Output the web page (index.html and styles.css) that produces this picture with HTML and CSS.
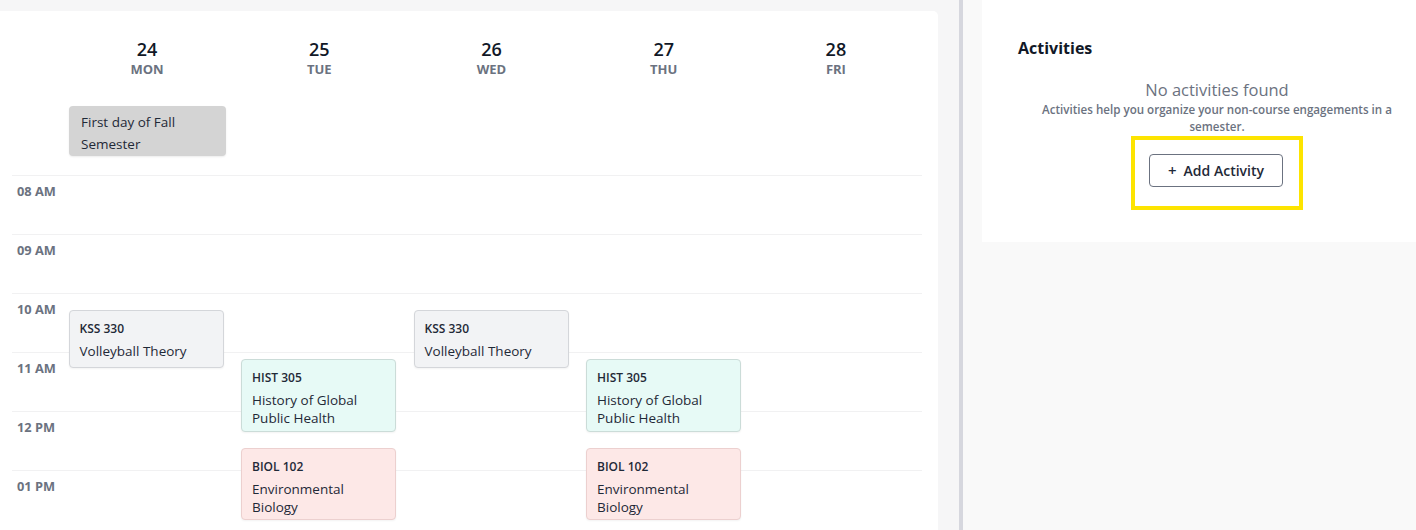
FILE: index.html
```html
<!DOCTYPE html>
<html lang="en">

<head>
    <meta charset="UTF-8">
    <meta name="viewport" content="width=device-width, initial-scale=1.0">
    <link rel="stylesheet" href="styles.css">
</head>

<body>
    <div class="page">
        <div class="calendar-pane">
            <div class="calendar">
                <div class="day-header">
                    <div class="gutter"></div>
                    <div class="day"><span class="day-num">24</span><span class="day-name">MON</span></div>
                    <div class="day"><span class="day-num">25</span><span class="day-name">TUE</span></div>
                    <div class="day"><span class="day-num">26</span><span class="day-name">WED</span></div>
                    <div class="day"><span class="day-num">27</span><span class="day-name">THU</span></div>
                    <div class="day"><span class="day-num">28</span><span class="day-name">FRI</span></div>
                </div>

                <div class="all-day">
                    <div class="gutter"></div>
                    <div class="all-day-cell">
                        <div class="all-day-event">First day of Fall Semester</div>
                    </div>
                    <div class="all-day-cell"></div>
                    <div class="all-day-cell"></div>
                    <div class="all-day-cell"></div>
                    <div class="all-day-cell"></div>
                </div>

                <div class="time-grid">
                    <div class="hour-row"><span class="hour-label">08 AM</span></div>
                    <div class="hour-row"><span class="hour-label">09 AM</span></div>
                    <div class="hour-row"><span class="hour-label">10 AM</span></div>
                    <div class="hour-row"><span class="hour-label">11 AM</span></div>
                    <div class="hour-row"><span class="hour-label">12 PM</span></div>
                    <div class="hour-row"><span class="hour-label">01 PM</span></div>

                    <div class="day-cols">
                        <div class="day-col">
                            <div class="event event-grey" style="top: 135px; height: 58px;">
                                <div class="event-code">KSS 330</div>
                                <div class="event-title">Volleyball Theory</div>
                            </div>
                        </div>
                        <div class="day-col">
                            <div class="event event-mint" style="top: 184px; height: 73px;">
                                <div class="event-code">HIST 305</div>
                                <div class="event-title">History of Global Public Health</div>
                            </div>
                            <div class="event event-rose" style="top: 273px; height: 72px;">
                                <div class="event-code">BIOL 102</div>
                                <div class="event-title">Environmental Biology</div>
                            </div>
                        </div>
                        <div class="day-col">
                            <div class="event event-grey" style="top: 135px; height: 58px;">
                                <div class="event-code">KSS 330</div>
                                <div class="event-title">Volleyball Theory</div>
                            </div>
                        </div>
                        <div class="day-col">
                            <div class="event event-mint" style="top: 184px; height: 73px;">
                                <div class="event-code">HIST 305</div>
                                <div class="event-title">History of Global Public Health</div>
                            </div>
                            <div class="event event-rose" style="top: 273px; height: 72px;">
                                <div class="event-code">BIOL 102</div>
                                <div class="event-title">Environmental Biology</div>
                            </div>
                        </div>
                        <div class="day-col"></div>
                    </div>
                </div>
            </div>
        </div>

        <div class="divider"></div>

        <div class="side-pane">
            <div class="activities">
                <h2>Activities</h2>
                <div class="empty">
                    <p class="empty-title">No activities found</p>
                    <p class="empty-text">Activities help you organize your non-course engagements in a semester.</p>
                    <div class="highlight">
                        <button class="add-btn"><span class="plus">+</span>Add Activity</button>
                    </div>
                </div>
            </div>
        </div>
    </div>
</body>

</html>
```

FILE: styles.css
```css
body {
    margin: 0;
    font-family: 'Open Sans', 'Noto Sans', sans-serif;
    background-color: #f8f8f9;
    color: #1f2937;
}

.page {
    display: flex;
    height: 100vh;
    overflow: hidden;
}

/* left side: week calendar */
.calendar-pane {
    width: 959px;
    flex-shrink: 0;
    padding-top: 11px;
    box-sizing: border-box;
    background-color: #f6f6f7;
}

.calendar {
    width: 938px;
    height: 100%;
    background-color: #fff;
    border-top-right-radius: 5px;
    padding: 0 16px 0 12px;
    box-sizing: border-box;
}

.gutter {
    width: 49px;
    flex-shrink: 0;
}

.day-header {
    display: flex;
    padding-top: 26px;
}

.day {
    width: 172.5px;
    display: flex;
    flex-direction: column;
    align-items: center;
}

.day-num {
    font-size: 18px;
    line-height: 24px;
    font-weight: 600;
    color: #111827;
}

.day-name {
    font-size: 13px;
    line-height: 17px;
    font-weight: 700;
    color: #6b7280;
}

.all-day {
    display: flex;
    padding: 28px 0 19px;
}

.all-day-cell {
    width: 172.5px;
}

.all-day-event {
    width: 157px;
    margin-left: 8px;
    box-sizing: border-box;
    padding: 5px 12px 1px;
    background-color: #d4d4d4;
    border-radius: 4px;
    box-shadow: 0 1px 2px rgba(0, 0, 0, 0.08);
    font-size: 13.5px;
    line-height: 22px;
    color: #1f2937;
}

.time-grid {
    position: relative;
}

.hour-row {
    height: 59px;
    border-top: 1px solid #f1f1f2;
    box-sizing: border-box;
    padding: 3px 0 0 5px;
}

.hour-label {
    font-size: 12.8px;
    line-height: 17px;
    font-weight: 700;
    color: #6b7280;
}

.day-cols {
    position: absolute;
    top: 0;
    bottom: 0;
    left: 49px;
    display: flex;
}

.day-col {
    width: 172.5px;
    position: relative;
}

.event {
    position: absolute;
    left: 7.5px;
    width: 155px;
    box-sizing: border-box;
    padding: 10px 10px;
    border: 1px solid #d4d6da;
    border-radius: 4px;
    box-shadow: 0 1px 2px rgba(0, 0, 0, 0.05);
}

.event-grey {
    background-color: #f2f3f5;
}

.event-mint {
    background-color: #e7faf6;
    border-color: #cbdcd8;
}

.event-rose {
    background-color: #fde8e7;
    border-color: #ecd0cf;
}

.event-code {
    font-size: 12px;
    line-height: 16px;
    font-weight: 600;
    margin-bottom: 5px;
}

.event-title {
    font-size: 13.5px;
    line-height: 18px;
}

/* right side: activities */
.divider {
    width: 4px;
    flex-shrink: 0;
    background-color: #d6d7de;
}

.side-pane {
    flex: 1;
    background-color: #f9f9f9;
    padding-left: 19px;
}

.activities {
    background-color: #fff;
    height: 242px;
    box-sizing: border-box;
    padding: 36px 0 0 36px;
}

.activities h2 {
    margin: 0;
    font-size: 16px;
    line-height: 24px;
    font-weight: 700;
    color: #111827;
}

.empty {
    margin-top: 19px;
    display: flex;
    flex-direction: column;
    align-items: center;
    text-align: center;
}

.empty-title {
    margin: 0;
    font-size: 16.5px;
    line-height: 22px;
    color: #6b7280;
}

.empty-text {
    margin: 0;
    max-width: 372px;
    font-size: 11.6px;
    line-height: 17px;
    font-weight: 600;
    color: #6b7280;
}

.highlight {
    margin-top: 1px;
    border: 4px solid #fde400;
    padding: 14px 16px 19px 14px;
}

.add-btn {
    font-family: inherit;
    font-size: 14px;
    font-weight: 600;
    color: #1f2937;
    background-color: #fff;
    border: 1px solid #6b7280;
    border-radius: 4px;
    padding: 6px 0;
    line-height: 19px;
    width: 134px;
    cursor: pointer;
}

.plus {
    font-size: 15px;
    margin-right: 7px;
}
```
